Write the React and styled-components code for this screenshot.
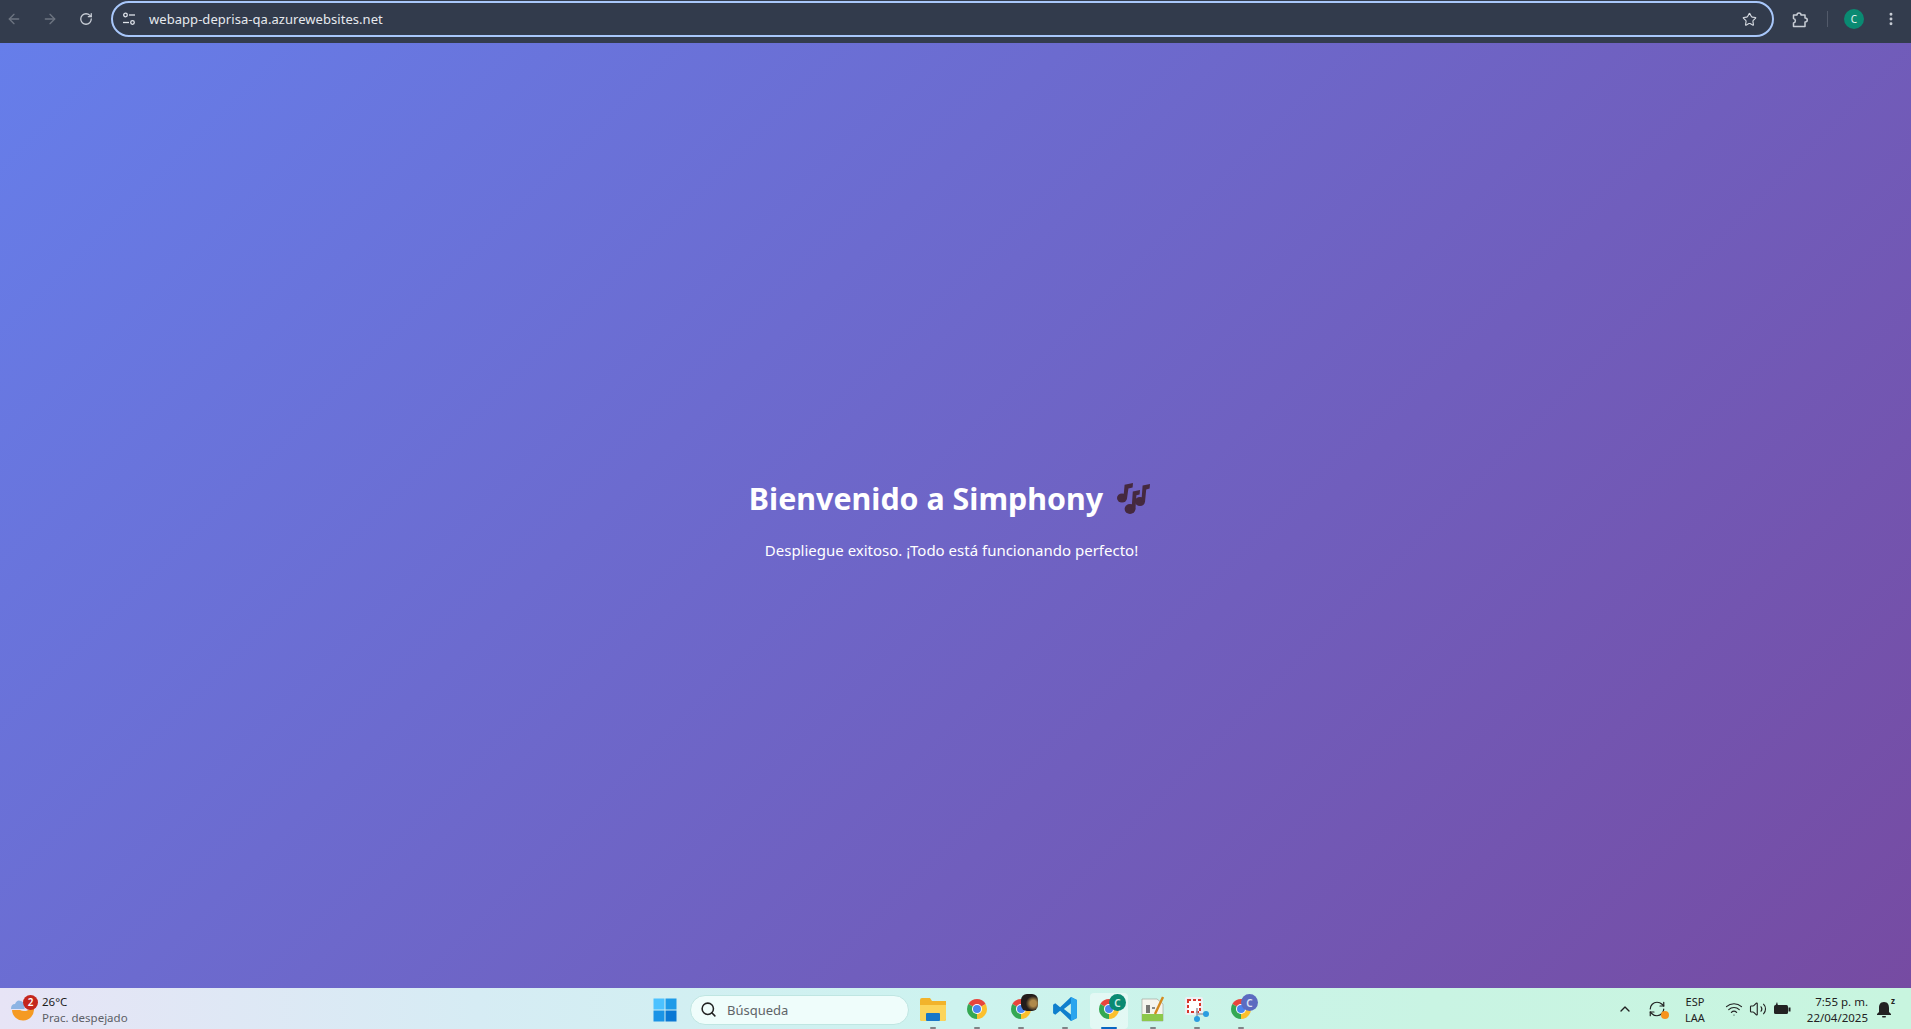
import React from 'react';
import styled, { createGlobalStyle } from 'styled-components';
import {
    ArrowLeft,
    ArrowRight,
    RotateCw,
    RefreshCw,
    Star,
    EllipsisVertical,
    Search,
    ChevronUp,
    Wifi,
    Volume2,
} from 'lucide-react';

const GlobalStyle = createGlobalStyle`
    html, body {
        margin: 0;
        padding: 0;
        height: 100%;
        overflow: hidden;
    }
    body {
        font-family: "Noto Sans", "Open Sans", sans-serif;
    }
`;

// Chrome logo, drawn from three arcs and a centre dot
function ChromeLogo({ size = 24 }) {
    return (
        <svg width={size} height={size} viewBox="0 0 48 48">
            <path d="M24 24 L6.7 14 A20 20 0 0 1 41.3 14 Z" fill="#e8453c" />
            <path d="M24 24 L41.3 14 A20 20 0 0 1 24 44 Z" fill="#fbc02d" />
            <path d="M24 24 L24 44 A20 20 0 0 1 6.7 14 Z" fill="#34a853" />
            <circle cx="24" cy="24" r="10" fill="#fff" />
            <circle cx="24" cy="24" r="8" fill="#4a85f0" />
        </svg>
    );
}

function MusicNotes() {
    return (
        <svg width="33" height="31" viewBox="0 0 33 31" fill="#45293f">
            <ellipse cx="5" cy="15" rx="5" ry="4.6" />
            <path d="M6.4 15 L7.6 1.8 L16 0 L15.6 4.6 L11.4 5.6 L10 15.5 Z" />
            <ellipse cx="13" cy="26" rx="5.4" ry="5" />
            <path d="M14.6 26 L15.8 8.5 L23 7 L22.6 11.4 L19.4 12.2 L18.4 26.5 Z" />
            <ellipse cx="23" cy="18.5" rx="5" ry="4.6" />
            <path d="M24.4 18.5 L25.6 2.5 L33 1 L32.6 5.4 L29.2 6.4 L28 19 Z" />
        </svg>
    );
}

function App() {
    return (
        <Page>
            <GlobalStyle />
            <Toolbar>
                <NavButton $dim><ArrowLeft size={16} /></NavButton>
                <NavButton $dim><ArrowRight size={16} /></NavButton>
                <NavButton><RotateCw size={14} strokeWidth={2.2} /></NavButton>
                <Omnibox>
                    <svg width="14" height="14" viewBox="0 0 14 14" fill="none" stroke="#dfe3ea" strokeWidth="1.3">
                        <circle cx="3.5" cy="3" r="1.8" />
                        <path d="M7 3 H13" />
                        <path d="M1 10.5 H7" />
                        <circle cx="10.5" cy="10.5" r="1.8" />
                    </svg>
                    <Url>webapp-deprisa-qa.azurewebsites.net</Url>
                    <Star size={15} color="#d5d9e0" strokeWidth={1.8} />
                </Omnibox>
                <ExtensionSlot>
                    <svg width="17" height="17" viewBox="0 0 17 17" fill="none" stroke="#c9ced6" strokeWidth="1.5" strokeLinejoin="round">
                        <path d="M1.5 4 H5 C5 1.2 9 1.2 9 4 H13 V7 C16 7 16 11 13 11 V15.5 H1.5 V12 C4 11.5 4 8 1.5 7.5 Z" />
                    </svg>
                </ExtensionSlot>
                <ToolbarDivider />
                <Avatar>C</Avatar>
                <MenuSlot><EllipsisVertical size={16} color="#c9ced6" strokeWidth={2.4} /></MenuSlot>
            </Toolbar>

            <Main>
                <Title>Bienvenido a Simphony <MusicNotes /></Title>
                <Subtitle>Despliegue exitoso. ¡Todo está funcionando perfecto!</Subtitle>
            </Main>

            <Taskbar>
                <Weather>
                    <WeatherIcon>
                        <svg width="23" height="23" viewBox="0 0 23 23">
                            <path d="M1 11 A11 11 0 0 0 23 10 Q23 7 21.5 5 A8.5 8.5 0 0 1 9 11 Z" fill="#f59a23" />
                            <path d="M0 10 Q0 5 4 5 Q6 0 10 2 Q14 3 13.5 10 Z" fill="#8db4e4" />
                        </svg>
                        <WeatherBadge>2</WeatherBadge>
                    </WeatherIcon>
                    <WeatherText>
                        <Temp>26°C</Temp>
                        <Forecast>Prac. despejado</Forecast>
                    </WeatherText>
                </Weather>

                <StartButton>
                    <svg width="24" height="24" viewBox="0 0 24 24">
                        <rect x="0.5" y="0.5" width="11" height="11" fill="#4cc2ff" />
                        <rect x="12.5" y="0.5" width="11" height="11" fill="#1e9be8" />
                        <rect x="0.5" y="12.5" width="11" height="11" fill="#1a94e6" />
                        <rect x="12.5" y="12.5" width="11" height="11" fill="#0a78d4" />
                    </svg>
                </StartButton>
                <SearchBox>
                    <Search size={17} color="#222" strokeWidth={2.2} />
                    <SearchText>Búsqueda</SearchText>
                </SearchBox>

                <Apps>
                    <AppSlot $running>
                        <svg width="26" height="24" viewBox="0 0 26 24">
                            <path d="M0 3 Q0 1 2 1 H10 L12 4 H26 V22 Q26 24 24 24 H2 Q0 24 0 22 Z" fill="#f2b32b" />
                            <path d="M0 8 H26 V22 Q26 24 24 24 H2 Q0 24 0 22 Z" fill="#fcd45a" />
                            <rect x="6" y="16" width="14" height="8" rx="1" fill="#1777c9" />
                        </svg>
                    </AppSlot>
                    <AppSlot $running><ChromeLogo /></AppSlot>
                    <AppSlot $running>
                        <ChromeLogo />
                        <ProfileBadge $bg="radial-gradient(circle at 72% 55%, #b08a4a 0 20%, #221c1a 48%)" $square />
                    </AppSlot>
                    <AppSlot $running>
                        <svg width="26" height="26" viewBox="0 0 24 24">
                            <path d="M17.5 1 L23 3.6 V20.4 L17.5 23 L7.5 13.7 L3 17.2 L1 16 V8 L3 6.8 L7.5 10.3 Z M17.5 7 L11 12 L17.5 17 Z" fill="#0f7fcd" fillRule="evenodd" />
                            <path d="M17.5 1 L23 3.6 V20.4 L17.5 23 Z" fill="#2aa5ee" />
                        </svg>
                    </AppSlot>
                    <AppSlot $active>
                        <ChromeLogo />
                        <ProfileBadge $bg="#0a8a72" $color="#d5efe9">C</ProfileBadge>
                    </AppSlot>
                    <AppSlot $running>
                        <svg width="24" height="26" viewBox="0 0 24 26">
                            <path d="M1 3 H16 L22 8 V25 H1 Z" fill="#f5f5ee" stroke="#9a9a90" strokeWidth="0.6" />
                            <path d="M1 18 H22 V25 H1 Z" fill="#8cc84b" />
                            <path d="M6 9 V17 M8 9 V17 M11 12 H14" stroke="#222" strokeWidth="1.2" />
                            <path d="M22 1 L14 18" stroke="#d58a1f" strokeWidth="2.4" />
                        </svg>
                    </AppSlot>
                    <AppSlot $running>
                        <svg width="26" height="26" viewBox="0 0 26 26">
                            <rect x="1" y="1" width="18" height="18" rx="2" fill="#eef0f4" />
                            <rect x="4" y="4" width="12" height="12" fill="#fff" stroke="#d8352a" strokeWidth="2" strokeDasharray="3 2" />
                            <path d="M13 12 L13 25 M13 18 L24 18" stroke="#9aa0a8" strokeWidth="1.6" />
                            <circle cx="22" cy="18" r="3" fill="#2a9de0" />
                            <circle cx="13" cy="23" r="3" fill="#2a9de0" />
                        </svg>
                    </AppSlot>
                    <AppSlot $running>
                        <ChromeLogo />
                        <ProfileBadge $bg="#5c6bc0" $color="#dfe3f5">C</ProfileBadge>
                    </AppSlot>
                </Apps>

                <Tray>
                    <TraySlot $width="32px"><ChevronUp size={16} color="#222" strokeWidth={2} /></TraySlot>
                    <TraySlot $width="32px">
                        <SyncIcon>
                            <RefreshCw size={18} color="#222" strokeWidth={1.6} />
                            <SyncDot />
                        </SyncIcon>
                    </TraySlot>
                    <Lang>
                        <span>ESP</span>
                        <span>LAA</span>
                    </Lang>
                    <TrayIcons>
                        <Wifi size={18} color="#222" strokeWidth={1.6} />
                        <Volume2 size={18} color="#222" strokeWidth={1.5} />
                        <svg width="18" height="14" viewBox="0 0 18 14">
                            <rect x="1" y="3" width="14" height="9" rx="1.5" fill="#222" />
                            <rect x="15.5" y="5.5" width="2" height="4" fill="#222" />
                            <path d="M4 0 L2.5 3.5 H5 Z" fill="#222" />
                        </svg>
                    </TrayIcons>
                    <Clock>
                        <span>7:55 p. m.</span>
                        <span>22/04/2025</span>
                    </Clock>
                    <Bell>
                        <svg width="16" height="18" viewBox="0 0 16 18" fill="#222">
                            <path d="M8 2 C4 2 3 5 3 8 V12 L1 14 V15 H15 V14 L13 12 V8 C13 5 12 2 8 2 Z" />
                            <rect x="6" y="16" width="4" height="1.6" rx="0.8" />
                        </svg>
                        <BellMark>z</BellMark>
                    </Bell>
                </Tray>
            </Taskbar>
        </Page>
    );
}

export default App;

const Page = styled.div`
    height: 100vh;
    display: flex;
    flex-direction: column;
`;

const Toolbar = styled.div`
    height: 43px;
    flex-shrink: 0;
    box-sizing: border-box;
    padding: 1px 0 6px 0;
    display: flex;
    align-items: center;
    background: #333c4d;
`;

const NavButton = styled.div`
    width: 28px;
    margin-right: 8px;
    display: flex;
    justify-content: center;
    color: ${(p) => (p.$dim ? '#6d7481' : '#c9ced6')};
`;

const Omnibox = styled.div`
    flex: 1;
    height: 36px;
    box-sizing: border-box;
    margin-left: 3px;
    padding: 0 15px 0 9px;
    display: flex;
    align-items: center;
    border: 2px solid #a8c7fa;
    border-radius: 18px;
    background: #323b4c;
`;

const Url = styled.span`
    flex: 1;
    margin-left: 13px;
    color: #e6e9ee;
    font-size: 13px;
    letter-spacing: 0.05px;
`;

const ExtensionSlot = styled.div`
    width: 53px;
    display: flex;
    justify-content: center;
`;

const ToolbarDivider = styled.div`
    width: 1px;
    height: 16px;
    background: #525a6a;
`;

const Avatar = styled.div`
    width: 20px;
    height: 20px;
    margin-left: 16px;
    border-radius: 50%;
    display: flex;
    align-items: center;
    justify-content: center;
    background: #0a8a72;
    color: #e4f4f0;
    font-size: 10px;
`;

const MenuSlot = styled.div`
    width: 47px;
    padding-left: 6px;
    box-sizing: border-box;
    display: flex;
    justify-content: center;
`;

const Main = styled.main`
    flex: 1;
    padding: 7px 8px 0 0;
    display: flex;
    flex-direction: column;
    align-items: center;
    justify-content: center;
    background: linear-gradient(135deg, #667eea 0%, #764ba2 100%);
    color: #fff;
`;

const Title = styled.h1`
    margin: 0 0 19px;
    padding-right: 4px;
    display: flex;
    align-items: center;
    gap: 14px;
    font-size: 30.4px;
    line-height: 42px;
    font-weight: 700;
    white-space: nowrap;
`;

const Subtitle = styled.p`
    margin: 0;
    font-size: 15px;
    line-height: 22px;
`;

const Taskbar = styled.footer`
    height: 41px;
    flex-shrink: 0;
    display: flex;
    align-items: center;
    background: linear-gradient(90deg, #e7e4f6 0%, #d6ecf4 25%, #cdf3ef 50%, #c9f4e3 75%, #c8f5df 100%);
`;

const Weather = styled.div`
    width: 653px;
    flex-shrink: 0;
    box-sizing: border-box;
    padding: 3px 0 0 11px;
    display: flex;
    align-items: center;
    gap: 8px;
`;

const WeatherIcon = styled.div`
    position: relative;
    width: 23px;
    height: 23px;
`;

const WeatherBadge = styled.span`
    position: absolute;
    top: -4px;
    right: -4px;
    width: 15px;
    height: 15px;
    border-radius: 50%;
    display: flex;
    align-items: center;
    justify-content: center;
    background: #c4261d;
    color: #fff;
    font-size: 10px;
    font-weight: 600;
`;

const WeatherText = styled.div`
    display: flex;
    flex-direction: column;
    font-size: 11.5px;
    line-height: 16px;
`;

const Temp = styled.span`
    color: #1b1b1b;
`;

const Forecast = styled.span`
    color: #5c5f66;
`;

const StartButton = styled.div`
    width: 24px;
    height: 24px;
    flex-shrink: 0;
    margin-top: 2px;
`;

const SearchBox = styled.div`
    width: 219px;
    height: 30px;
    flex-shrink: 0;
    box-sizing: border-box;
    margin: 2px 0 0 13px;
    padding-left: 9px;
    display: flex;
    align-items: center;
    gap: 10px;
    border: 1px solid #bfe6e2;
    border-radius: 15px;
    background: #effdfb;
`;

const SearchText = styled.span`
    color: #5f6468;
    font-size: 13px;
`;

const Apps = styled.div`
    margin-left: 2px;
    display: flex;
    align-items: center;
`;

const AppSlot = styled.div`
    position: relative;
    width: 44px;
    height: 41px;
    display: flex;
    align-items: center;
    justify-content: center;

    ${(p) => p.$active && `
        &::before {
            content: '';
            position: absolute;
            inset: 5px 3px 0 3px;
            border-radius: 4px;
            background: rgba(255, 255, 255, 0.45);
        }
        & > svg { position: relative; }
    `}

    &::after {
        content: '';
        position: absolute;
        bottom: 0;
        left: 50%;
        height: 2px;
        border-radius: 1px;
        transform: translateX(-50%);
        width: ${(p) => (p.$active ? '16px' : '6px')};
        background: ${(p) => (p.$active ? '#0a66c2' : '#7d8587')};
    }
`;

const ProfileBadge = styled.span`
    position: absolute;
    top: 6px;
    right: 5px;
    width: 17px;
    height: 17px;
    border-radius: ${(p) => (p.$square ? '35%' : '50%')};
    display: flex;
    align-items: center;
    justify-content: center;
    background: ${(p) => p.$bg};
    color: ${(p) => p.$color};
    font-size: 10px;
    font-weight: 600;
`;

const Tray = styled.div`
    margin-left: auto;
    padding-right: 19px;
    display: flex;
    align-items: center;
`;

const TraySlot = styled.div`
    width: ${(p) => p.$width};
    display: flex;
    justify-content: center;
`;

const SyncIcon = styled.div`
    position: relative;
    display: flex;
`;

const SyncDot = styled.span`
    position: absolute;
    right: -3px;
    bottom: -1px;
    width: 8px;
    height: 8px;
    border-radius: 50%;
    background: #f7941d;
`;

const Lang = styled.div`
    width: 44px;
    padding-top: 3px;
    display: flex;
    flex-direction: column;
    align-items: center;
    color: #222;
    font-size: 11px;
    line-height: 16px;
`;

const TrayIcons = styled.div`
    width: 74px;
    display: flex;
    align-items: center;
    justify-content: space-between;
    padding: 0 0 0 8px;
    box-sizing: border-box;
`;

const Clock = styled.div`
    width: 77px;
    padding-top: 3px;
    display: flex;
    flex-direction: column;
    align-items: flex-end;
    color: #222;
    font-size: 11.5px;
    line-height: 16px;
`;

const Bell = styled.div`
    position: relative;
    margin-left: 8px;
    display: flex;
`;

const BellMark = styled.span`
    position: absolute;
    top: -5px;
    right: -3px;
    color: #222;
    font-size: 8px;
    font-weight: 700;
`;
